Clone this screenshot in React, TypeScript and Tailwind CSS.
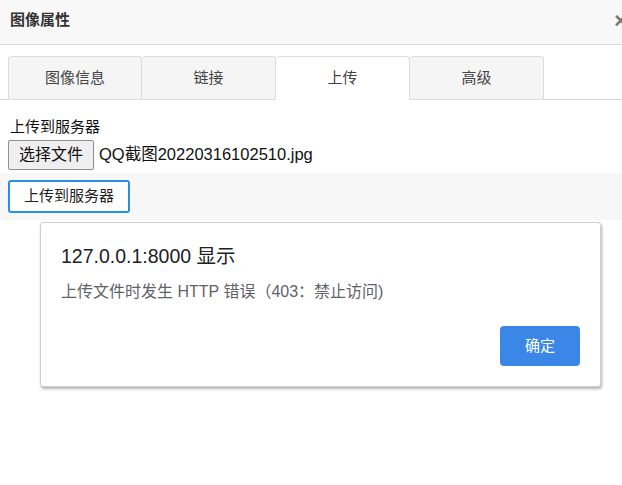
import React from 'react';

const tabs = ['图像信息', '链接', '上传', '高级'];

const App: React.FC = () => {
  const active = 2;

  return (
    <div
      className="relative w-[622px] h-[485px] bg-white overflow-hidden text-[#222]"
      style={{ fontFamily: '"Microsoft YaHei", "Liberation Sans", "Noto Sans CJK SC", sans-serif' }}
    >
      {/* 标题栏 */}
      <div className="h-[45px] bg-[#f8f8f8] border-b border-[#ddd] flex items-center justify-between pl-[10px] pb-[3px]">
        <span className="text-[15px] font-bold text-[#333]">图像属性</span>
        <span className="text-[22px] font-bold text-[#777] leading-none translate-x-[5px]">×</span>
      </div>

      {/* 选项卡 */}
      <div className="mt-[11px] flex pl-[8px] border-b border-[#d4d4d4] h-[44px]">
        {tabs.map((t, i) => (
          <div
            key={t}
            className={
              'w-[134px] h-[44px] flex items-center justify-center text-[15px] text-[#444] border border-[#ddd] rounded-t-[3px] ' +
              (i > 0 ? 'border-l-0 ' : '') +
              (i === active ? 'bg-white border-b-white relative z-10' : 'bg-[#f5f5f5]')
            }
          >
            {t}
          </div>
        ))}
      </div>

      {/* 上传面板 */}
      <div className="pt-[18px]">
        <div className="pl-[10px] text-[15px] leading-[18px] text-[#111]">上传到服务器</div>
        <div className="pl-[8px] mt-[3px] flex items-center gap-[5px] h-[31px]">
          <button className="h-[30px] px-[10px] bg-[#efefef] border border-[#8f8f8f] rounded-[2px] text-[16px] text-[#111]">
            选择文件
          </button>
          <span className="text-[16.5px] text-[#111]">QQ截图20220316102510.jpg</span>
        </div>
        <div className="mt-[3px] bg-[#f7f7f7] h-[47px] pl-[8px] pt-[7px]">
          <button className="h-[33px] w-[122px] bg-white border-2 border-[#2b8fe0] rounded-[3px] text-[15px] text-[#222]">
            上传到服务器
          </button>
        </div>
      </div>

      {/* 浏览器提示框 */}
      <div className="absolute left-[40px] top-[222px] w-[561px] h-[165px] bg-white border border-[#cfcfcf] rounded-[3px] shadow-[1px_2px_3px_rgba(0,0,0,0.3)] flex flex-col px-[20px]">
        <div className="mt-[21px] text-[19.5px] leading-[24px] text-[#202124]">127.0.0.1:8000 显示</div>
        <div className="mt-[14px] text-[16px] leading-[20px] text-[#5f6368]">上传文件时发生 HTTP 错误（403：禁止访问)</div>
        <div className="mt-auto mb-[20px] flex justify-end">
          <button className="w-[80px] h-[40px] bg-[#3b87e8] rounded-[4px] text-white text-[15px]">确定</button>
        </div>
      </div>
    </div>
  );
};

export default App;
